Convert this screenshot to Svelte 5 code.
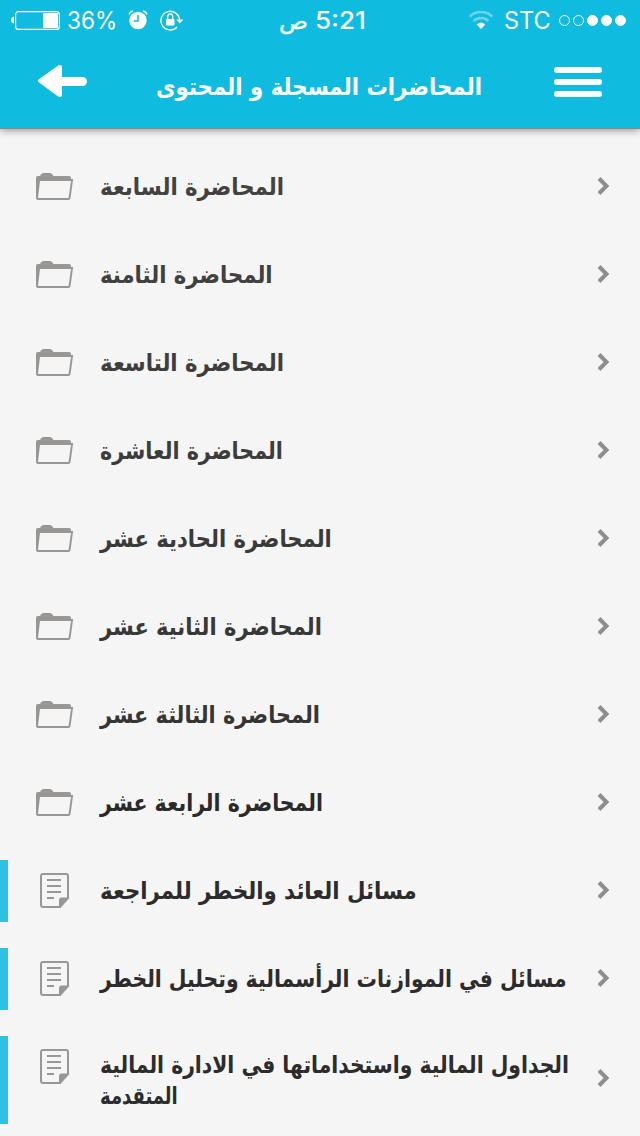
<script>
  const rows = [
    { kind: 'folder', color: '#424242', lines: [['المحاضرة السابعة', 184]] },
    { kind: 'folder', color: '#404040', lines: [['المحاضرة الثامنة', 173]] },
    { kind: 'folder', color: '#3e3e3e', lines: [['المحاضرة التاسعة', 184]] },
    { kind: 'folder', color: '#3c3c3c', lines: [['المحاضرة العاشرة', 183]] },
    { kind: 'folder', color: '#3a3a3a', lines: [['المحاضرة الحادية عشر', 232]] },
    { kind: 'folder', color: '#383838', lines: [['المحاضرة الثانية عشر', 222]] },
    { kind: 'folder', color: '#353535', lines: [['المحاضرة الثالثة عشر', 220]] },
    { kind: 'folder', color: '#2a2a2a', lines: [['المحاضرة الرابعة عشر', 223]] },
    { kind: 'note', color: '#2c2c2c', lines: [['مسائل العائد والخطر للمراجعة', 317]] },
    { kind: 'note', color: '#2c2c2c', lines: [['مسائل في الموازنات الرأسمالية وتحليل الخطر', 467]] },
    { kind: 'note', color: '#2c2c2c', lines: [['الجداول المالية واستخداماتها في الادارة المالية', 469], ['المتقدمة', 78]] }
  ];

  // Scales a label horizontally so that it spans the given width.
  function fit(node, width) {
    node.style.transform = `scaleX(${width / node.offsetWidth})`;
  }
</script>

<div class="screen">
  <header>
    <div class="status">
      <svg class="battery" width="50" height="20" viewBox="0 0 50 20">
        <path d="M3 6.500Q0 7 0 10t3 3.500z" fill="#fff" />
        <rect x="4.600" y="1.600" width="43.800" height="17.800" rx="3" fill="none" stroke="#fff" stroke-width="1.200" />
        <rect x="32" y="3" width="15" height="15" rx="1" fill="#fff" />
      </svg>
      <div class="label percent"><span use:fit={50}>36%</span></div>
      <svg class="alarm" width="20" height="20" viewBox="0 0 20 20">
        <circle cx="10" cy="10.500" r="8.700" fill="#fff" />
        <path d="M1 4.500Q2 1.500 5 1M15 1q3 .5 4 3.500" fill="none" stroke="#fff" stroke-width="1.400" />
        <path d="M10 5v6H6" fill="none" stroke="#10bbe0" stroke-width="1.500" />
      </svg>
      <svg class="lock" width="24" height="22" viewBox="0 0 24 22">
        <path d="M19.500 10a9.300 9.300 0 1 0-2.500 7" fill="none" stroke="#fff" stroke-width="1.400" />
        <path d="M16.300 9.500h7l-3.500 4z" fill="#fff" />
        <rect x="6" y="9" width="8.500" height="6.500" rx=".7" fill="#fff" />
        <path d="M7.700 10V6.500a2.500 2.500 0 0 1 5 0V10" fill="none" stroke="#fff" stroke-width="1.400" />
      </svg>
      <div class="label time"><span dir="rtl" use:fit={87}>5:21 <i>ص</i></span></div>
      <svg class="wifi" width="24" height="18" viewBox="0 0 24 18">
        <path d="M.8 5.500a16 16 0 0 1 22.400 0M4.700 10a10.500 10.500 0 0 1 14.600 0" fill="none" stroke="#6cd5ed" stroke-width="2.600" />
        <path d="M7.700 13.500q4.300-4 8.600 0L12 18z" fill="#fff" />
      </svg>
      <div class="label carrier"><span use:fit={47}>STC</span></div>
      <div class="dots"><b></b><b></b><b class="on"></b><b class="on"></b><b class="on"></b></div>
    </div>
    <div class="bar">
      <svg width="50" height="34" viewBox="0 0 50 34">
        <path d="M1 15.200L20.500 1.200Q24 .2 24 3v10h20.500a4.500 4.500 0 0 1 0 9H24v9q0 3-3.500 1.800L1 18.500Q-1 16.800 1 15.200z" fill="#fff" />
      </svg>
      <h1 dir="rtl"><span use:fit={326}>المحاضرات المسجلة و المحتوى</span></h1>
      <div class="menu"><b></b><b></b><b></b></div>
    </div>
  </header>

  <main>
    {#each rows as row}
      <div class="row {row.kind}" class:tall={row.lines.length > 1}>
        <div class="icon">
          {#if row.kind === 'folder'}
            <svg width="38" height="28" viewBox="0 0 38 28">
              <path d="M0 25V5Q0 3 2 3H4Q5 0 8 0h6q2 0 3.500 3H33q2 0 2 2v1h2.200L34.500 25Q34.200 27 32.500 27H2Q0 27 0 25zM4 8L2 25h30.500L35 8z" fill="#999796" fill-rule="evenodd" />
            </svg>
          {:else}
            <svg width="30" height="36" viewBox="0 0 30 36">
              <path d="M28 25V3Q28 1 26 1H3Q1 1 1 3v29q0 2 2 2h17z" fill="none" stroke="#999796" stroke-width="2" />
              <path d="M19 34.500V27q0-2.500 2.500-2.500H29L20 34.500z" fill="#999796" />
              <path d="M7 7h14M7 13h14M7 19h14M7 25h7" stroke="#999796" stroke-width="2" />
            </svg>
          {/if}
        </div>
        <div class="text" style:color={row.color}>
          {#each row.lines as [text, width]}
            <div class="line"><span dir="rtl" use:fit={width}>{text}</span></div>
          {/each}
        </div>
        <svg class="chevron" width="14" height="20" viewBox="0 0 14 20">
          <path d="M2 2.500l7.500 7.500L2 17.500" fill="none" stroke="#8e8e8e" stroke-width="4" />
        </svg>
      </div>
    {/each}
  </main>
</div>

<style>
  :global(body) { background: #f5f5f5; }
  .screen { width: 640px; height: 1136px; overflow: hidden; background: #f5f5f5; }
  svg { display: block; flex: none; }
  header {
    box-sizing: border-box;
    height: 129px;
    background: #10bbe0;
    border-bottom: 1px solid #8a8a8a;
    box-shadow: 0 1px 8px rgba(0, 0, 0, .45);
    color: #fff;
  }
  .status { display: flex; height: 42px; align-items: flex-start; padding-left: 11px; }
  .status svg { margin-top: 10px; }
  .label { font: 24px/42px Inter, "DejaVu Sans", sans-serif; white-space: nowrap; }
  .label span { display: inline-block; transform-origin: 0 50%; }
  .percent { width: 60px; margin-left: 6px; }
  .status .alarm { margin-left: 1px; }
  .status .lock { margin-left: 12px; }
  .time { width: 90px; margin-left: 95px; font-weight: 500; }
  .time i { font: 22px "DejaVu Sans", sans-serif; -webkit-text-stroke: .4px #fff; }
  .status .wifi { margin: 11px 0 0 100px; }
  .carrier { width: 48px; margin-left: 11px; }
  .dots { display: flex; gap: 3px; margin: 15px 0 0 7px; }
  .dots b { box-sizing: border-box; width: 11px; height: 11px; border: 1px solid #fff; border-radius: 50%; }
  .dots .on { background: #fff; }
  .bar { display: flex; height: 86px; padding: 0 38px; align-items: flex-start; }
  .bar svg { margin-top: 22px; }
  h1 { width: 326px; margin: 23px 0 0 68px; font: bold 24px/44px "DejaVu Sans", sans-serif; white-space: nowrap; direction: ltr; }
  h1 span { display: inline-block; direction: rtl; transform-origin: 0 50%; }
  .menu { display: flex; flex-direction: column; gap: 6px; margin: 25px 0 0 72px; }
  .menu b { width: 48px; height: 6px; border-radius: 3px; background: #fff; }
  main { display: flex; flex-direction: column; gap: 26px; padding-top: 27px; }
  .row { box-sizing: border-box; display: flex; height: 62px; border-left: 8px solid transparent; }
  .note { border-color: #2ec2e2; }
  .tall { height: 88px; }
  .icon { width: 92px; flex: none; padding: 17px 0 0 28px; box-sizing: border-box; }
  .note .icon { padding: 13px 0 0 32px; }
  .text { width: 490px; padding-top: 16px; }
  .tall .text { padding-top: 14px; }
  .line { height: 31px; font: bold 24px/31px "DejaVu Sans", sans-serif; white-space: nowrap; }
  .line span { display: inline-block; transform-origin: 0 50%; }
  .chevron { margin: 20px 0 0 7px; }
  .tall .chevron { margin-top: 32px; }
</style>
